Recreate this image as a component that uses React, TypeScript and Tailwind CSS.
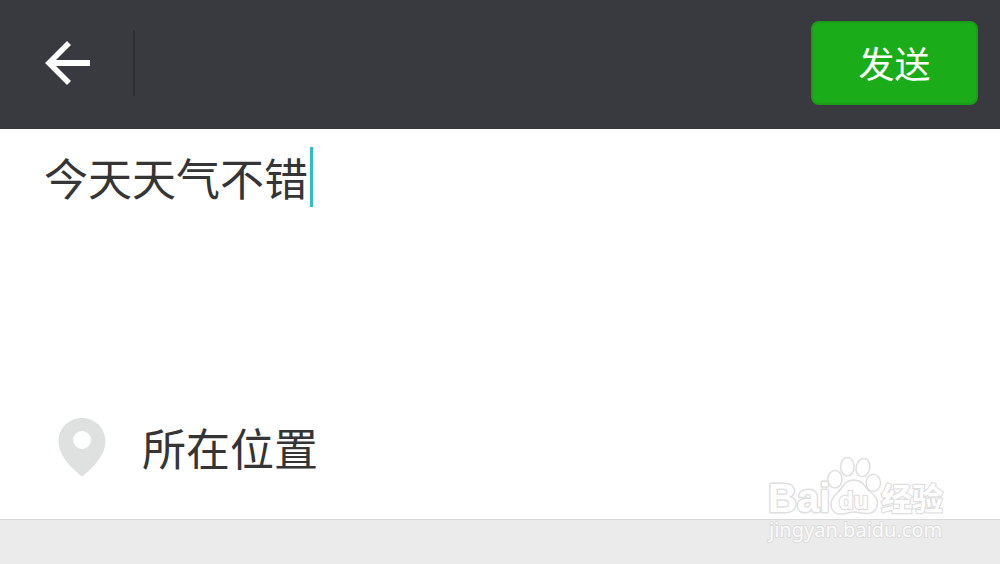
import { useState } from "react";

function BackIcon() {
  return (
    <svg className="h-12 w-12" viewBox="0 0 48 48" fill="none" stroke="#fff" aria-hidden="true">
      <path d="M25 4 L5 24 L25 44" strokeWidth="5.6" />
      <path d="M6 24 H46" strokeWidth="6" />
    </svg>
  );
}

function PinIcon() {
  return (
    <svg className="h-[60px] w-12" viewBox="0 0 48 60" aria-hidden="true">
      <path
        fill="#dfe1e0"
        fillRule="evenodd"
        d="M24 1C11 1 .5 11 .5 24.5C.5 38 12 50 24 59.500C36 50 47.500 38 47.500 24.500C47.500 11 37 1 24 1ZM24 14a9 9 0 1 1 0 18a9 9 0 1 1 0-18Z"
      />
    </svg>
  );
}

function Watermark() {
  return (
    <svg
      className="pointer-events-none absolute right-[50px] bottom-[14px] h-[100px] w-[190px]"
      viewBox="0 0 190 100"
      fill="#fff"
      stroke="#dfdfdf"
      strokeWidth="1.5"
      strokeLinejoin="round"
      aria-label="Baidu 经验"
    >
      <ellipse cx="75" cy="29.300" rx="7" ry="8.800" />
      <ellipse cx="87.400" cy="16.700" rx="6.800" ry="9.300" />
      <ellipse cx="103" cy="17.500" rx="6.800" ry="9.200" transform="rotate(12 103 17.500)" />
      <ellipse cx="113.300" cy="32.800" rx="7.200" ry="8.600" />
      <path d="M93.500 30C99 30 103 32.500 105.500 37C108.500 42.500 117.500 44.500 117.500 53C117.500 60 113 63.500 106 63.500C101 63.500 98 62 94 62C89 62 86 64 80.500 64C74.500 64 71 60 71 54C71 46.500 77.500 44 81 38.500C84.500 32.500 88 30 93.500 30Z" />
      <g className="font-['Liberation_Sans',sans-serif] font-bold" paintOrder="stroke">
        <text x="8" y="62" fontSize="40" strokeWidth="3">Bai</text>
        <text x="79" y="59" fontSize="24" strokeWidth="2.5">du</text>
      </g>
      <text
        className="font-['Noto_Sans_CJK_SC',sans-serif] font-bold"
        x="121" y="60" fontSize="31" strokeWidth="2.5" paintOrder="stroke"
      >
        经验
      </text>
      <text
        className="font-['Noto_Sans',sans-serif]"
        x="9" y="87" fontSize="20" fill="#fafafa" stroke="#dcdcdc" strokeWidth="2" paintOrder="stroke"
      >
        jingyan.baidu.com
      </text>
    </svg>
  );
}

export default function App() {
  const [message, setMessage] = useState("今天天气不错");
  const [focused, setFocused] = useState(false);

  return (
    <div className="relative flex min-h-screen flex-col bg-[#ebebeb] font-['Noto_Sans_CJK_SC',sans-serif] text-[#353535]">
      <header className="flex items-center bg-[#393a3f] pt-[21px] pr-[22px] pb-6 pl-11">
        <button type="button" aria-label="返回" className="shrink-0">
          <BackIcon />
        </button>
        <div className="ml-[41px] h-[66px] w-[2px] bg-[#2e2f33]" />
        <button
          type="button"
          className="ml-auto h-[84px] w-[167px] rounded-lg border-2 border-[#1a9c1a] bg-[#1aad19] pb-[2px] text-4xl text-white"
        >
          发送
        </button>
      </header>

      <main className="border-b border-[#d9d9d9] bg-white">
        <div className="relative px-11 pt-[18px]">
          <textarea
            aria-label="这一刻的想法"
            value={message}
            onChange={(e) => setMessage(e.target.value)}
            onFocus={() => setFocused(true)}
            onBlur={() => setFocused(false)}
            rows={4}
            className="block h-[240px] w-full resize-none text-[44px] leading-[60px] caret-[#2cbfc7] outline-none"
          />
          {!focused && (
            <span className="pointer-events-none absolute top-[18px] left-[310px] h-[60px] w-[3px] bg-[#2cbfc7]" />
          )}
        </div>
        <button type="button" className="flex w-full items-center gap-9 px-[58px] pt-[27px] pb-[39px] text-left">
          <PinIcon />
          <span className="text-[44px] leading-[66px]">所在位置</span>
        </button>
      </main>

      <Watermark />
    </div>
  );
}
